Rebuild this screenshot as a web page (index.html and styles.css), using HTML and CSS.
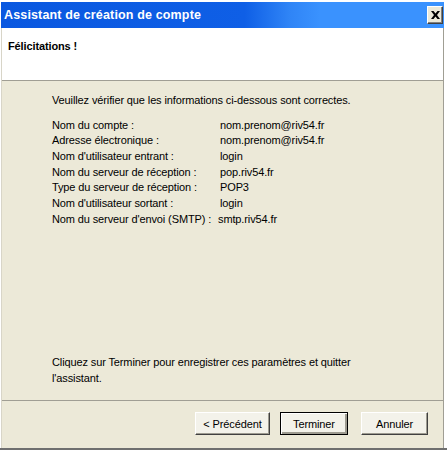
FILE: index.html
```html
<!DOCTYPE html>
<html lang="fr">
<head>
<meta charset="utf-8">
<title>Assistant de création de compte</title>
<link rel="stylesheet" href="styles.css">
</head>
<body>
<div class="window">
  <div class="titlebar">
    <span class="title">Assistant de création de compte</span>
    <span class="close">
      <svg width="9" height="8" viewBox="0 0 9 8"><path d="M0 0h2.5L4.5 2.4 6.5 0H9L6 4l3 4H6.5L4.5 5.6 2.5 8H0l3-4z" fill="#000"/></svg>
    </span>
  </div>
  <div class="inner">
    <div class="header">Félicitations !</div>
    <div class="content">
      <p class="intro">Veuillez vérifier que les informations ci-dessous sont correctes.</p>
      <div class="info">
        <span>Nom du compte :</span><span>nom.prenom@riv54.fr</span>
        <span>Adresse électronique :</span><span>nom.prenom@riv54.fr</span>
        <span>Nom d'utilisateur entrant :</span><span>login</span>
        <span>Nom du serveur de réception :</span><span>pop.riv54.fr</span>
        <span>Type du serveur de réception :</span><span>POP3</span>
        <span>Nom d'utilisateur sortant :</span><span>login</span>
        <span>Nom du serveur d'envoi (SMTP) :</span><span class="shift">smtp.riv54.fr</span>
      </div>
      <p class="outro">Cliquez sur Terminer pour enregistrer ces paramètres et quitter<br>l'assistant.</p>
    </div>
    <div class="buttons">
      <button class="btn btn-back">&lt; Précédent</button>
      <button class="btn btn-default">Terminer</button>
      <button class="btn btn-cancel">Annuler</button>
    </div>
  </div>
</div>
</body>
</html>
```
FILE: styles.css
```css
html, body {
  margin: 0;
  padding: 0;
  background: #ffffff;
}
.window {
  width: 447px;
  height: 450px;
  box-sizing: border-box;
  padding: 2px 3px 0 1px;
  border-bottom: 2px solid #6f6f6f;
  display: flex;
  flex-direction: column;
  background: #ffffff;
  font-family: "Liberation Sans", Arial, sans-serif;
  font-size: 11px;
  letter-spacing: -0.12px;
  color: #000;
}
.titlebar {
  height: 26px;
  flex: none;
  display: flex;
  align-items: center;
  justify-content: space-between;
  padding-left: 3px;
  background: linear-gradient(to right, #0a58e0 0%, #0f5fe6 55%, #2f84f6 65%, #3a92fe 72%, #3a92fe 100%);
}
.title {
  color: #fff;
  font-weight: bold;
  font-size: 12.5px;
  letter-spacing: 0.15px;
}
.close {
  width: 16px;
  height: 18px;
  box-sizing: border-box;
  margin-right: 1px;
  background: #ece9d8;
  border: 1px solid;
  border-color: #fff #404040 #404040 #fff;
  box-shadow: inset -1px -1px #808080;
  display: flex;
  align-items: center;
  justify-content: center;
}
.inner {
  flex: 1;
  display: flex;
  flex-direction: column;
  border-left: 1px solid #d8d5c8;
  border-right: 1px solid #a09e94;
}
.header {
  height: 53px;
  flex: none;
  box-sizing: border-box;
  background: #fff;
  padding: 12px 0 0 6px;
  font-weight: bold;
  line-height: 13px;
  border-bottom: 1px solid #a09e94;
}
.content {
  flex: 1;
  display: flex;
  flex-direction: column;
  background: #ece9d8;
  padding: 11px 0 14px 50px;
  border-bottom: 1px solid #a09e94;
  line-height: 16px;
}
.intro {
  margin: 0;
}
.info {
  margin-top: 9px;
  display: grid;
  grid-template-columns: 168px auto;
  grid-auto-rows: 15.67px;
  align-items: center;
}
.shift {
  margin-left: -2px;
}
.outro {
  margin: auto 0 0 0;
}
.buttons {
  height: 47px;
  flex: none;
  box-sizing: border-box;
  background: #ece9d8;
  display: flex;
  justify-content: flex-end;
  align-items: flex-start;
  padding: 11px 15px 0 0;
}
.btn {
  height: 23px;
  box-sizing: border-box;
  margin: 0;
  padding: 0;
  font-family: "Liberation Sans", Arial, sans-serif;
  font-size: 11px;
  letter-spacing: -0.12px;
  color: #000;
  background: #f3f2ea;
  border: 1px solid;
  border-color: #fff #404040 #404040 #fff;
  box-shadow: inset -1px -1px #9d9b90;
  border-radius: 0;
}
.btn-back {
  width: 75px;
}
.btn-default {
  width: 68px;
  margin-left: 10px;
  border-color: #000;
  box-shadow: inset 1px 1px #fff, inset -2px -2px #9d9b90;
}
.btn-cancel {
  width: 67px;
  margin-left: 13px;
}
```
